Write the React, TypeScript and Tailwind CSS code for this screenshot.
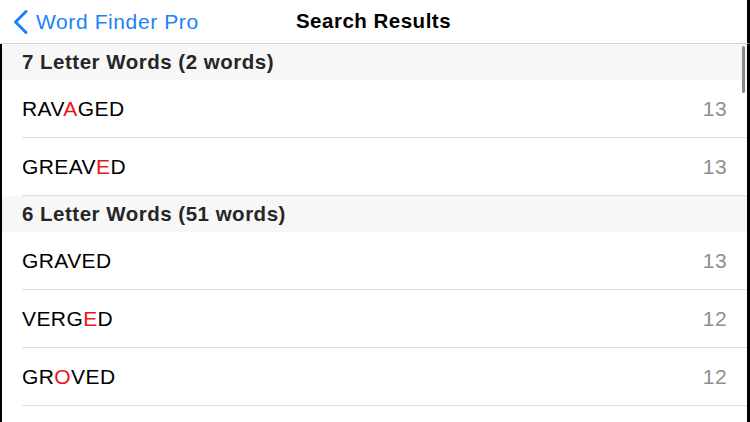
const sections = [
  {
    title: "7 Letter Words (2 words)",
    words: [
      { w: "RAVAGED", hi: 3, score: 13 },
      { w: "GREAVED", hi: 5, score: 13 },
    ],
  },
  {
    title: "6 Letter Words (51 words)",
    words: [
      { w: "GRAVED", hi: -1, score: 13 },
      { w: "VERGED", hi: 4, score: 12 },
      { w: "GROVED", hi: 2, score: 12 },
      { w: "", hi: -1, score: 0 },
    ],
  },
];

const Word = ({ w, hi }: { w: string; hi: number }) => (
  <span>
    {w.split("").map((c, i) => (
      <span key={i} className={i === hi ? "text-[#e8141b]" : ""}>
        {c}
      </span>
    ))}
  </span>
);

export default function App() {
  return (
    <div
      className="w-[750px] h-[422px] overflow-hidden bg-white flex flex-col relative"
      style={{ fontFamily: '"Liberation Sans", Arial, sans-serif' }}
    >
      <div className="h-[44px] shrink-0 flex items-center relative border-b border-[#d6d6d8] border-r-[3px] border-r-black">
        <div className="flex items-center pl-[12px] text-[#1a82fb] text-[21px] tracking-[0.6px]">
          <svg width="17" height="26" viewBox="0 0 17 26" className="mr-[7px]">
            <path d="M14 2.5 L3.5 13 L14 23.5" fill="none" stroke="#1a82fb" strokeWidth="3" strokeLinecap="round" strokeLinejoin="round" />
          </svg>
          <span>Word Finder Pro</span>
        </div>
        <div className="absolute left-0 right-0 text-center text-[20.5px] tracking-[0.5px] font-semibold text-black pointer-events-none">
          Search Results
        </div>
      </div>
      <div className="flex-1 flex flex-col border-l-2 border-l-black border-r-[3px] border-r-black">
        {sections.map((s) => (
          <div key={s.title}>
            <div className="h-[36px] bg-[#f7f7f7] flex items-center pl-[20px] text-[20.5px] tracking-[0.5px] font-bold text-[#262626]">
              {s.title}
            </div>
            {s.words.map((r, i) => (
              <div key={i} className="h-[58px] pl-[20px] flex">
                <div className="flex-1 flex items-center justify-between pr-[20px] border-b border-[#e0e0e2] text-[21px] tracking-[0.4px] text-black">
                  <Word w={r.w} hi={r.hi} />
                  {r.score > 0 && <span className="text-[#8e8e93]">{r.score}</span>}
                </div>
              </div>
            ))}
          </div>
        ))}
      </div>
      <div className="absolute left-[742px] top-[46px] w-[3px] h-[47px] rounded-full bg-[#8a8a8a]" />
    </div>
  );
}
